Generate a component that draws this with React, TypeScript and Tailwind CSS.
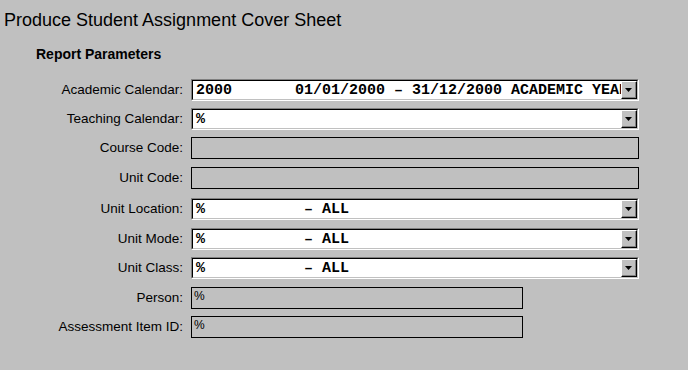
const sans = { fontFamily: '"Liberation Sans", Arial, sans-serif' };

type Row =
  | { label: string; kind: "combo"; value: string; mt: string }
  | { label: string; kind: "disabled"; value?: string; wide: boolean; mt: string };

const rows: Row[] = [
  { label: "Academic Calendar:", kind: "combo", value: "2000       01/01/2000 – 31/12/2000 ACADEMIC YEAR 2000", mt: "mt-0" },
  { label: "Teaching Calendar:", kind: "combo", value: "%", mt: "mt-[7px]" },
  { label: "Course Code:", kind: "disabled", wide: true, mt: "mt-[7px]" },
  { label: "Unit Code:", kind: "disabled", wide: true, mt: "mt-[8px]" },
  { label: "Unit Location:", kind: "combo", value: "%           – ALL", mt: "mt-[9px]" },
  { label: "Unit Mode:", kind: "combo", value: "%           – ALL", mt: "mt-[8px]" },
  { label: "Unit Class:", kind: "combo", value: "%           – ALL", mt: "mt-[7px]" },
  { label: "Person:", kind: "disabled", value: "%", wide: false, mt: "mt-[8px]" },
  { label: "Assessment Item ID:", kind: "disabled", value: "%", wide: false, mt: "mt-[7px]" },
];

function Combo({ value }: { value: string }) {
  return (
    <div className="w-[448px] h-[22px] border border-t-[#808080] border-l-[#808080] border-b-white border-r-white">
      <div className="flex h-full border border-t-black border-l-black border-b-[#c0c0c0] border-r-[#c0c0c0] bg-white">
        <div
          className="flex-1 min-w-0 overflow-hidden whitespace-pre pl-[3px] flex items-center text-[15px] font-bold text-black leading-none"
          style={{ fontFamily: '"Liberation Mono", "Courier New", monospace' }}
        >
          {value}
        </div>
        <div className="w-[16px] h-full border border-t-white border-l-white border-b-black border-r-black bg-[#c0c0c0]">
          <div className="w-full h-full flex items-center justify-center border-b border-r border-b-[#808080] border-r-[#808080]">
            <svg width="7" height="4" viewBox="0 0 7 4">
              <path d="M0 0h7L3.5 4z" fill="#000" />
            </svg>
          </div>
        </div>
      </div>
    </div>
  );
}

function Disabled({ value, wide }: { value?: string; wide: boolean }) {
  return (
    <div
      className={`${wide ? "w-[448px]" : "w-[332px]"} h-[22px] border border-black bg-[#c0c0c0] pl-[2px] pt-[2px] text-[12px] leading-none text-black`}
      style={sans}
    >
      {value}
    </div>
  );
}

export default function App() {
  return (
    <div className="w-[688px] h-[370px] bg-[#c0c0c0] overflow-hidden text-black" style={sans}>
      <h1 className="pl-[4px] pt-[11px] text-[18px] leading-none font-normal">
        Produce Student Assignment Cover Sheet
      </h1>
      <h2 className="pl-[36px] mt-[18px] text-[14px] leading-none font-bold">Report Parameters</h2>

      <div className="mt-[18px] flex flex-col">
        {rows.map((r) => (
          <div key={r.label} className={`flex items-center ${r.mt}`}>
            <div className="w-[183px] text-right text-[13.5px] leading-none">{r.label}</div>
            <div className="ml-[8px]">
              {r.kind === "combo" ? <Combo value={r.value} /> : <Disabled value={r.value} wide={r.wide} />}
            </div>
          </div>
        ))}
      </div>
    </div>
  );
}
